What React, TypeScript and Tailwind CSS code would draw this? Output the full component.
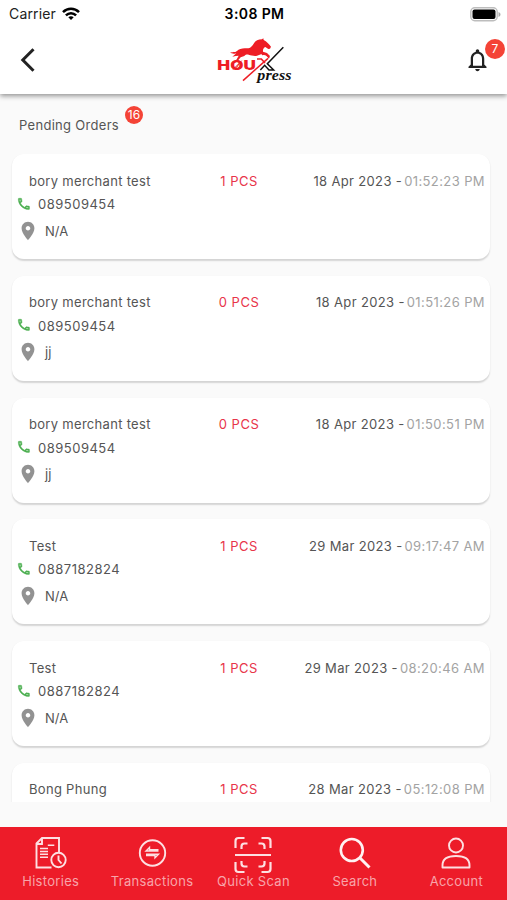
import React from "react";

type Order = { name: string; pcs: number; date: string; time: string; phone: string; place: string };

const orders: Order[] = [
  { name: "bory merchant test", pcs: 1, date: "18 Apr 2023", time: "01:52:23 PM", phone: "089509454", place: "N/A" },
  { name: "bory merchant test", pcs: 0, date: "18 Apr 2023", time: "01:51:26 PM", phone: "089509454", place: "jj" },
  { name: "bory merchant test", pcs: 0, date: "18 Apr 2023", time: "01:50:51 PM", phone: "089509454", place: "jj" },
  { name: "Test", pcs: 1, date: "29 Mar 2023", time: "09:17:47 AM", phone: "0887182824", place: "N/A" },
  { name: "Test", pcs: 1, date: "29 Mar 2023", time: "08:20:46 AM", phone: "0887182824", place: "N/A" },
  { name: "Bong Phung", pcs: 1, date: "28 Mar 2023", time: "05:12:08 PM", phone: "", place: "" },
];

function StatusBar() {
  return (
    <div className="grid h-7 grid-cols-3 items-center pl-[9px] pr-[6px] text-black">
      <div className="flex items-center gap-[6px]">
        <span className="text-[14px] leading-7 tracking-[0.15px] text-[#222]">Carrier</span>
        <svg width="18" height="14" viewBox="0 0 18 14" fill="none" stroke="#000" strokeWidth="2.5">
          <path d="M1 5.200C5.500.7 12.500.7 17 5.200" />
          <path d="M3.900 8.300C6.800 5.400 11.200 5.400 14.100 8.300" />
          <path d="M6.300 10.300C7.900 8.900 10.100 8.900 11.700 10.300L9 13Z" fill="#000" stroke="none" />
        </svg>
      </div>
      <span className="-ml-[1px] whitespace-nowrap text-center text-[14px] font-semibold leading-7 tracking-[0.4px]">3:08 PM</span>
      <svg className="justify-self-end" width="31" height="15" viewBox="0 0 31 15">
        <rect x=".8" y=".8" width="26.400" height="13" rx="4" fill="#fff" stroke="#bdbdbd" strokeWidth="1.400" />
        <rect x="2.500" y="2.500" width="23" height="9.600" rx="2" fill="#000" />
        <path d="M28.500 5v5c1.200-.4 2-1.400 2-2.500s-.8-2.100-2-2.500Z" fill="#aaa" />
      </svg>
    </div>
  );
}

function Logo() {
  return (
    <svg width="77" height="47" viewBox="48 32 231 141">
      <path
        d="M87 80C95 75 101 80 108 74C114 67 126 65 136 66C149 67 153 60 159 51C163 43 172 39 183 39L187 36L188 41C197 46 204 53 210 61L207 67L202 68L193 62C188 64 185 69 186 76L198 80L207 89L204 95L195 86L180 84L168 88C160 90 151 87 143 85C137 84 134 85 130 89L119 93L109 105L99 110L108 97L113 88L104 89L94 91L106 81C98 85 94 78 87 80Z"
        fill="#ee1d25"
      />
      <path d="M183 85C194 82 200 87 204 96" fill="none" stroke="#ee1d25" strokeWidth="4" />
      <text x="49" y="131" textLength="116" lengthAdjust="spacingAndGlyphs" fontFamily="Inter, sans-serif" fontWeight="900" fontSize="40" fill="#ee1d25">HOU</text>
      <path d="M96 130L122 103M106 124L115 112" stroke="#ee1d25" strokeWidth="3" />
      <path d="M168 98H181L192 110" fill="none" stroke="#ee1d25" strokeWidth="5" />
      <path d="M201 96L126 163" stroke="#ee1d25" strokeWidth="4.500" />
      <path d="M247 63L199 112L218 131H204L191 117L178 131" fill="none" stroke="#111" strokeWidth="4.500" />
      <text x="169" y="161" textLength="103" lengthAdjust="spacingAndGlyphs" fontFamily="'Liberation Serif', serif" fontStyle="italic" fontWeight="700" fontSize="43" fill="#111">press</text>
    </svg>
  );
}

function Header() {
  return (
    <header className="relative z-10 h-[94px] shrink-0 bg-white shadow-[0_2px_5px_rgba(0,0,0,0.42)]">
      <StatusBar />
      <div className="flex h-[64px] items-center justify-between pl-[20px] pr-[17px]">
        <svg className="w-[34px]" width="34" height="26" viewBox="0 0 34 26" fill="none" stroke="#222" strokeWidth="3">
          <path d="M13.500 2.200L2.800 13L13.500 23.800" />
        </svg>
        <Logo />
        <div className="relative flex w-[34px] justify-end">
          <svg className="-mr-[1px]" width="27" height="28" viewBox="0 0 24 24" fill="#222">
            <path d="M12 22c1.100 0 2-.9 2-2h-4c0 1.100.9 2 2 2zm6-6v-5c0-3.070-1.630-5.640-4.500-6.320V4c0-.83-.67-1.500-1.500-1.500s-1.500.67-1.500 1.500v.68C7.640 5.360 6 7.920 6 11v5l-2 2v1h16v-1l-2-2zm-2 1H8v-6c0-2.480 1.510-4.500 4-4.500s4 2.020 4 4.500v6z" />
          </svg>
          <span className="absolute -right-[15px] -top-[7px] flex size-[20px] items-center justify-center rounded-full bg-[#f44336] text-[12px] text-white">7</span>
        </div>
      </div>
    </header>
  );
}

function OrderCard({ order }: { order: Order }) {
  return (
    <article className="mb-[16.800px] h-[105px] shrink-0 rounded-[12px] bg-white pt-[16.500px] text-[#555] shadow-[0_1.500px_1.500px_rgba(0,0,0,0.15)]">
      <div className="grid h-5 grid-cols-[171px_77px_1fr] items-center pl-[17px] pr-[5px] tracking-[0.3px]">
        <span>{order.name}</span>
        <span className="pl-[1px] text-center tracking-[0.5px] text-[#e8344a]">{order.pcs} PCS</span>
        <span className="flex justify-end gap-[2px] whitespace-nowrap">
          <span className="tracking-[0.350px]">{order.date} -</span>
          <span className="tracking-[0.400px] text-[#a3a3a3]">{order.time}</span>
        </span>
      </div>
      <div className="mt-[3.500px] flex h-5 items-center pl-[5px]">
        <svg width="15" height="15" viewBox="0 0 24 24" fill="#4caf50" stroke="#4caf50" strokeWidth=".6">
          <g transform="translate(-1 -1)">
            <path d="M6.540 5c.06.89.21 1.760.45 2.590l-1.200 1.200c-.41-1.200-.67-2.470-.76-3.790h1.510m9.860 12.020c.85.24 1.720.39 2.600.45v1.490c-1.320-.09-2.590-.35-3.800-.75l1.200-1.190M7.500 3H4c-.55 0-1 .45-1 1 0 9.390 7.610 17 17 17 .55 0 1-.45 1-1v-3.490c0-.55-.45-1-1-1-1.240 0-2.450-.2-3.570-.57-.1-.04-.21-.05-.31-.05-.26 0-.51.1-.71.290l-2.200 2.200c-2.830-1.450-5.150-3.760-6.590-6.590l2.200-2.200c.28-.28.36-.67.25-1.020C8.700 6.450 8.500 5.250 8.500 4c0-.55-.45-1-1-1z" />
          </g>
        </svg>
        <span className="ml-[6px] tracking-[0.500px]">{order.phone}</span>
      </div>
      <div className="mt-[6.500px] flex h-5 items-center pl-[5px]">
        <svg width="22" height="22" viewBox="0 0 24 24" fill="#929292">
          <path d="M12 2C8.130 2 5 5.130 5 9c0 5.250 7 13 7 13s7-7.750 7-13c0-3.870-3.130-7-7-7zm0 9.500c-1.380 0-2.500-1.120-2.500-2.500s1.120-2.500 2.500-2.500 2.500 1.120 2.500 2.500-1.120 2.500-2.500 2.500z" />
        </svg>
        <span className="ml-[6px] tracking-normal">{order.place}</span>
      </div>
    </article>
  );
}

const tabs = [
  {
    label: "Histories",
    icon: (
      <svg width="32" height="32" viewBox="0 0 32 32" fill="none" stroke="#fde0e2" strokeWidth="1.900">
        <path d="M16.500 30.500H1.500V6.500L7 1h17v14.500M1.500 7H7V1" />
        <path d="M12.800 8.300h6.500M5 11.500h8M5 14.400h8M5 17.300h8M5 20.200h8" strokeWidth="1.500" />
        <circle cx="23.500" cy="23" r="7.200" />
        <path d="M23.500 18.500V23l3 3.500" />
      </svg>
    ),
  },
  {
    label: "Transactions",
    icon: (
      <svg width="32" height="32" viewBox="0 0 32 32" fill="none" stroke="#fde0e2" strokeWidth="1.900">
        <circle cx="16.500" cy="16" r="12.700" />
        <path d="M22.500 14H10l3.500-3.500v2.200h9M10 17.300H22.500l-3.500 3.500v-2.200h-9" strokeWidth="1.400" />
      </svg>
    ),
  },
  {
    label: "Quick Scan",
    icon: (
      <svg className="mt-[4px]" width="38" height="38" viewBox="0 0 38 38" fill="none" stroke="#fde0e2" strokeWidth="2.200">
        <path d="M1 19h36" />
        <path d="M1.500 12V5q0-3 3-3h6M36.500 12V5q0-3-3-3h-6M1.500 26v7q0 3 3 3h6M36.500 26v7q0 3-3 3h-6" />
        <path d="M7.500 13v-2.500q0-3 3-3h3M30.500 13v-2.500q0-3-3-3h-3M7.500 25v2.500q0 3 3 3h3M30.500 25v2.500q0 3-3 3h-3" />
      </svg>
    ),
  },
  {
    label: "Search",
    icon: (
      <svg width="32" height="32" viewBox="0 0 32 32" fill="none" stroke="#fff1f2" strokeWidth="2.600">
        <circle cx="12.800" cy="13" r="11" />
        <path d="M20.500 20.500L30.500 30.500" strokeWidth="3" />
      </svg>
    ),
  },
  {
    label: "Account",
    icon: (
      <svg width="32" height="32" viewBox="0 0 32 32" fill="none" stroke="#fde0e2" strokeWidth="1.900">
        <circle cx="16" cy="8.500" r="7" />
        <path d="M2.500 30.500v-2.200c0-6 5-9.300 13.500-9.300s13.500 3.300 13.500 9.300v2.200Z" strokeLinejoin="round" />
      </svg>
    ),
  },
];

export default function App() {
  return (
    <div className="flex h-[900px] w-[507px] flex-col overflow-hidden bg-[#fafafa] font-['Inter',sans-serif] text-[13px] leading-5 tracking-[0.3px]">
      <Header />
      <div className="flex h-[60px] shrink-0 items-start gap-[6px] pl-[19px] pt-[12px]">
        <h1 className="mt-[9px] text-[#555]">Pending Orders</h1>
        <span className="flex size-[18px] items-center justify-center rounded-full bg-[#f44336] text-[12px] tracking-normal text-white">16</span>
      </div>
      <main className="flex h-[648px] shrink-0 flex-col overflow-hidden pl-[12px] pr-[17px]">
        {orders.map((o, i) => (
          <OrderCard key={i} order={o} />
        ))}
      </main>
      <nav className="mt-auto grid h-[73.500px] shrink-0 grid-cols-5 bg-[#ed1c29]">
        {tabs.map((t) => (
          <div key={t.label} className="flex flex-col items-center pt-[8px] text-[#f8a4aa]">
            <div className="flex h-[37px] items-center">{t.icon}</div>
            <span className="whitespace-nowrap leading-[18px]">{t.label}</span>
          </div>
        ))}
      </nav>
    </div>
  );
}
